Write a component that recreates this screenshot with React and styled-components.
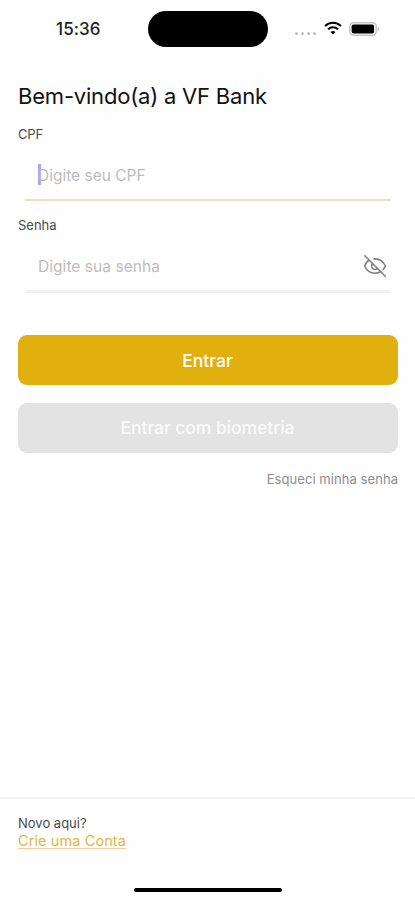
import React from "react";
import styled, { createGlobalStyle } from "styled-components";

const GlobalStyle = createGlobalStyle`
  *, *::before, *::after { box-sizing: border-box; }
  body { margin: 0; background: #fefefe; }
  input, button { font: inherit; letter-spacing: inherit; }
`;

const Screen = styled.div`
  display: flex;
  flex-direction: column;
  width: 100%;
  height: 900px;
  background: #fefefe;
  color: #111;
  font-family: Inter, "Liberation Sans", sans-serif;
`;

const StatusBar = styled.header`
  display: grid;
  grid-template-columns: 148px 120px 1fr;
  height: 84px;
  padding-top: 11px;
  align-items: start;
`;

const Clock = styled.time`
  padding-left: 56px;
  font-size: 17px;
  font-weight: 500;
  line-height: 36px;
  letter-spacing: 0.1px;
  color: #222;
`;

const Island = styled.div`
  height: 36px;
  border-radius: 18px;
  background: #000;
`;

const Indicators = styled.div`
  display: flex;
  align-items: center;
  height: 36px;
  padding-left: 27px;
`;

const Signal = styled.div`
  display: flex;
  gap: 3px;
  margin: 8px 8px 0 0;
`;

const SignalDot = styled.i`
  width: 3px;
  height: 3px;
  border-radius: 50%;
  background: #bdbdbd;
`;

const WifiIcon = styled.svg`
  width: 18px;
  height: 14px;
  margin: -2px 7px 0 0;
`;

const BatteryIcon = styled.svg`
  width: 31px;
  height: 14px;
  margin-top: -1px;
`;

const Content = styled.main`
  flex: 1;
  display: flex;
  flex-direction: column;
  padding: 0 17px 0 18px;
`;

const Title = styled.h1`
  margin: 0 0 14px;
  font-size: 22px;
  font-weight: 400;
  line-height: 24px;
  letter-spacing: -0.2px;
  white-space: nowrap;
`;

const Field = styled.div`
  height: 91px;
`;

const Label = styled.label`
  display: block;
  font-size: 13px;
  line-height: 25px;
  height: 26px;
  color: #4a4a4a;
  letter-spacing: ${(p) => p.$spacing};
`;

const InputRow = styled.div`
  display: flex;
  align-items: center;
  height: ${(p) => (p.$active ? "53px" : "54px")};
  margin: 0 7px;
  padding: 2px 4px 0 13px;
  border-bottom: ${(p) => (p.$active ? "2px solid #f4dfc0" : "3px solid #f1f1f1")};
`;

const Caret = styled.span`
  width: 3px;
  height: 21px;
  margin-right: -3px;
  background: #a5a8f0;
`;

const TextInput = styled.input`
  flex: 1;
  min-width: 0;
  padding: 2px 0 0;
  border: 0;
  outline: 0;
  background: transparent;
  font-size: 15.5px;
  letter-spacing: ${(p) => p.$spacing};
  color: #222;
  &::placeholder { color: #bdbdbd; opacity: 1; }
`;

const EyeButton = styled.button`
  display: flex;
  padding: 0;
  border: 0;
  background: none;
`;

const EyeIcon = styled.svg`
  width: 24px;
  height: 24px;
  fill: none;
  stroke: #808080;
  stroke-width: 1.6;
  stroke-linecap: round;
`;

const Actions = styled.div`
  display: flex;
  flex-direction: column;
  gap: 18px;
  margin-top: 31px;
`;

const ActionButton = styled.button`
  height: 50px;
  padding: ${(p) => (p.$muted ? "0 1px 0 0" : "2px 1px 0 0")};
  border: 0;
  border-radius: 9px;
  background: ${(p) => (p.$muted ? "#e3e3e3" : "#e1af0e")};
  color: ${(p) => (p.$muted ? "#fafafa" : "#fff")};
  font-size: 17.5px;
  font-weight: 500;
  line-height: 48px;
  letter-spacing: ${(p) => (p.$muted ? "-0.05px" : "0")};
`;

const ForgotLink = styled.a`
  align-self: flex-end;
  margin-top: 16px;
  font-size: 13px;
  line-height: 20px;
  letter-spacing: 0.06px;
  color: #8e8e8e;
`;

const Footer = styled.footer`
  display: flex;
  flex-direction: column;
  align-items: flex-start;
  height: 103px;
  padding: 15px 18px 8px;
  border-top: 2px solid #f1f1f1;
`;

const Prompt = styled.span`
  font-size: 13px;
  line-height: 18px;
  color: #4a4a4a;
`;

const CreateLink = styled.a`
  font-size: 14.5px;
  line-height: 18px;
  letter-spacing: 0.1px;
  color: #e5b545;
  text-decoration: underline;
  text-decoration-color: #f2cf9d;
  text-underline-offset: 2px;
`;

const HomeIndicator = styled.div`
  align-self: center;
  width: 148px;
  height: 4px;
  margin-top: auto;
  border-radius: 2px;
  background: #000;
`;

export default function App() {
  return (
    <>
      <GlobalStyle />
      <Screen>
        <StatusBar>
          <Clock>15:36</Clock>
          <Island />
          <Indicators>
            <Signal>
              <SignalDot />
              <SignalDot />
              <SignalDot />
              <SignalDot />
            </Signal>
            <WifiIcon viewBox="0 0 18 14" fill="none" stroke="#000" strokeWidth="2">
              <path d="M1 5.1a11.4 11.4 0 0 1 16 0" />
              <path d="M4 8.3a7.2 7.2 0 0 1 10 0" />
              <path d="M6.6 11a3.6 3.6 0 0 1 4.8 0L9 13.6z" fill="#000" stroke="none" />
            </WifiIcon>
            <BatteryIcon viewBox="0 0 31 14">
              <rect x="0.8" y="0.8" width="26.4" height="12.4" rx="3.6" fill="#fff" stroke="#c4c4c4" strokeWidth="1.4" />
              <rect x="2.6" y="2.5" width="22.5" height="9" rx="2" fill="#000" />
              <path d="M28.6 5v4q1.8-.6 1.8-2t-1.8-2" fill="#c4c4c4" />
            </BatteryIcon>
          </Indicators>
        </StatusBar>
        <Content>
          <Title>Bem-vindo(a) a VF Bank</Title>
          <Field>
            <Label htmlFor="cpf" $spacing="-0.2px">CPF</Label>
            <InputRow $active>
              <Caret />
              <TextInput id="cpf" placeholder="Digite seu CPF" $spacing="0" />
            </InputRow>
          </Field>
          <Field>
            <Label htmlFor="senha" $spacing="0">Senha</Label>
            <InputRow>
              <TextInput id="senha" type="password" placeholder="Digite sua senha" $spacing="0.05px" />
              <EyeButton aria-label="Mostrar senha">
                <EyeIcon viewBox="0 0 24 24">
                  <path d="M1.8 1.8l20.5 20.5" />
                  <path d="M11 4.9c5-.4 9 2.2 11.3 7.1a12 12 0 0 1-2.1 3.6" />
                  <path d="M5.5 6.5C3.8 7.7 2.4 9.6 1.7 12c2.1 4.8 5.8 7.2 10.3 7.2 1.9 0 3.7-.5 5.3-1.4" />
                  <path d="M9.6 9.6a3.3 3.3 0 0 0 4.8 4.8" />
                </EyeIcon>
              </EyeButton>
            </InputRow>
          </Field>
          <Actions>
            <ActionButton>Entrar</ActionButton>
            <ActionButton $muted>Entrar com biometria</ActionButton>
          </Actions>
          <ForgotLink>Esqueci minha senha</ForgotLink>
        </Content>
        <Footer>
          <Prompt>Novo aqui?</Prompt>
          <CreateLink>Crie uma Conta</CreateLink>
          <HomeIndicator />
        </Footer>
      </Screen>
    </>
  );
}
